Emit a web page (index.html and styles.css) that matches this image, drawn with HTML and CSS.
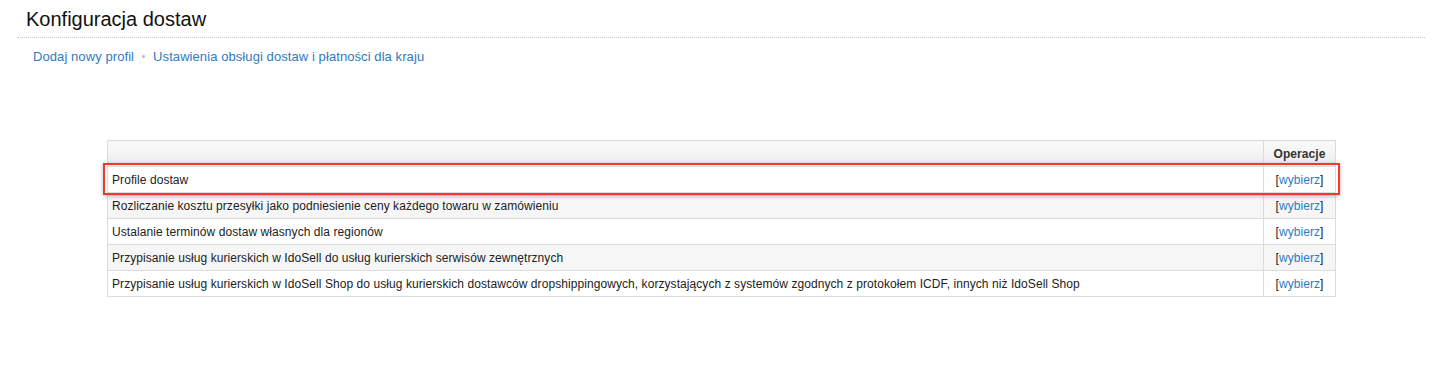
FILE: index.html
```html
<!DOCTYPE html>
<html lang="pl">
<head>
<meta charset="utf-8">
<title>Konfiguracja dostaw</title>
<link rel="stylesheet" href="styles.css">
</head>
<body>
<div class="page">
  <h1 class="title">Konfiguracja dostaw</h1>
  <div class="rule"></div>
  <nav class="links">
    <a href="#">Dodaj nowy profil</a>
    <span class="sep">•</span>
    <a href="#">Ustawienia obsługi dostaw i płatności dla kraju</a>
  </nav>
  <div class="table-wrap">
    <table class="grid">
      <thead>
        <tr><th class="name"></th><th class="ops">Operacje</th></tr>
      </thead>
      <tbody>
        <tr><td>Profile dostaw</td><td class="ops">[<a href="#">wybierz</a>]</td></tr>
        <tr class="alt"><td>Rozliczanie kosztu przesyłki jako podniesienie ceny każdego towaru w zamówieniu</td><td class="ops">[<a href="#">wybierz</a>]</td></tr>
        <tr><td>Ustalanie terminów dostaw własnych dla regionów</td><td class="ops">[<a href="#">wybierz</a>]</td></tr>
        <tr class="alt"><td>Przypisanie usług kurierskich w IdoSell do usług kurierskich serwisów zewnętrznych</td><td class="ops">[<a href="#">wybierz</a>]</td></tr>
        <tr><td>Przypisanie usług kurierskich w IdoSell Shop do usług kurierskich dostawców dropshippingowych, korzystających z systemów zgodnych z protokołem ICDF, innych niż IdoSell Shop</td><td class="ops">[<a href="#">wybierz</a>]</td></tr>
      </tbody>
    </table>
    <div class="highlight"></div>
  </div>
</div>
</body>
</html>
```

FILE: styles.css
```css
html, body {
  margin: 0;
  padding: 0;
  background: #fff;
}
body {
  font-family: "Liberation Sans", Arial, Helvetica, sans-serif;
  color: #222;
}
.page {
  padding: 8px 18px 0 17px;
}
.title {
  margin: 0 0 0 9px;
  font-size: 20px;
  font-weight: normal;
  line-height: 23px;
  color: #111;
}
.rule {
  margin-top: 6px;
  border-top: 1px dotted #c8c8c8;
}
.links {
  margin: 11px 0 0 16px;
  font-size: 13px;
  line-height: 16px;
  letter-spacing: 0.08px;
}
.links a {
  color: #2f7bbf;
  text-decoration: none;
}
.links .sep {
  color: #b5b5b5;
  font-size: 10px;
  margin: 0 4px 0 4px;
  vertical-align: 1px;
}
.table-wrap {
  position: relative;
  margin: 75px 0 0 90px;
  width: 1229px;
}
.grid {
  width: 1229px;
  border-collapse: collapse;
  font-size: 12px;
  color: #222;
  letter-spacing: 0.07px;
}
.grid th, .grid td {
  border: 1px solid #dcdcdc;
  height: 26px;
  padding: 0 4px;
  box-sizing: border-box;
}
.grid thead th {
  background: linear-gradient(#fafafa, #ececec);
  font-weight: bold;
  color: #333;
  height: 26px;
}
.grid td {
  text-align: left;
}
.grid .ops {
  width: 72px;
  text-align: center;
}
.grid tr.alt td {
  background: #f6f6f6;
}
.grid td.ops a {
  color: #2f7bbf;
  text-decoration: none;
}
.highlight {
  position: absolute;
  left: -4px;
  top: 23px;
  width: 1237px;
  height: 32px;
  box-sizing: border-box;
  border: 2px solid #ee3b2b;
  box-shadow: 0 1px 4px rgba(0,0,0,0.3);
  pointer-events: none;
}
```
